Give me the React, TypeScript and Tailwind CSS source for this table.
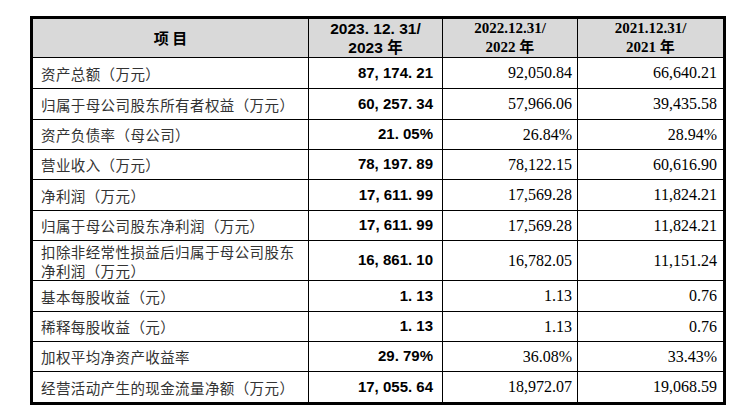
import React from "react";

type Row = {
  label: React.ReactNode;
  y2023: string;
  y2022: string;
  y2021: string;
  h: string;
};

const rows: Row[] = [
  { label: "资产总额（万元）", y2023: "87, 174. 21", y2022: "92,050.84", y2021: "66,640.21", h: "h-[30px]" },
  { label: "归属于母公司股东所有者权益（万元）", y2023: "60, 257. 34", y2022: "57,966.06", y2021: "39,435.58", h: "h-[30px]" },
  { label: "资产负债率（母公司）", y2023: "21. 05%", y2022: "26.84%", y2021: "28.94%", h: "h-[29px]" },
  { label: "营业收入（万元）", y2023: "78, 197. 89", y2022: "78,122.15", y2021: "60,616.90", h: "h-[29px]" },
  { label: "净利润（万元）", y2023: "17, 611. 99", y2022: "17,569.28", y2021: "11,824.21", h: "h-[30px]" },
  { label: "归属于母公司股东净利润（万元）", y2023: "17, 611. 99", y2022: "17,569.28", y2021: "11,824.21", h: "h-[29px]" },
  {
    label: (
      <>
        扣除非经常性损益后归属于母公司股东
        <br />
        净利润（万元）
      </>
    ),
    y2023: "16, 861. 10",
    y2022: "16,782.05",
    y2021: "11,151.24",
    h: "h-[39px]",
  },
  { label: "基本每股收益（元）", y2023: "1. 13", y2022: "1.13", y2021: "0.76", h: "h-[30px]" },
  { label: "稀释每股收益（元）", y2023: "1. 13", y2022: "1.13", y2021: "0.76", h: "h-[29px]" },
  { label: "加权平均净资产收益率", y2023: "29. 79%", y2022: "36.08%", y2021: "33.43%", h: "h-[29px]" },
  { label: "经营活动产生的现金流量净额（万元）", y2023: "17, 055. 64", y2022: "18,972.07", y2021: "19,068.59", h: "h-[30px]" },
];

const cjk = "font-['Noto_Sans_CJK_SC',sans-serif]";
const serif = "font-['Liberation_Serif','Noto_Sans_CJK_SC',serif]";
const sans = "font-['Liberation_Sans','Noto_Sans_CJK_SC',sans-serif]";

const App = () => {
  return (
    <div className="w-[738px] h-[418px] bg-white pt-[16px] pl-[30px]">
      <div className="w-[696px] border-[3px] border-black bg-black grid grid-cols-[275px_133px_134px_145px] gap-px">
        {/* header */}
        <div className={`h-[38px] bg-[#d9d9d9] flex items-center justify-center text-[15px] font-bold text-black ${cjk}`}>
          项 目
        </div>
        <div className={`h-[38px] bg-[#d9d9d9] flex flex-col items-center justify-center text-[15.5px] leading-[19px] font-bold text-black ${sans}`}>
          <span>2023. 12. 31/</span>
          <span>2023 年</span>
        </div>
        <div className={`h-[38px] bg-[#d9d9d9] flex flex-col items-center justify-center text-[15px] leading-[19px] font-bold text-black ${serif}`}>
          <span>2022.12.31/</span>
          <span>2022 年</span>
        </div>
        <div className={`h-[38px] bg-[#d9d9d9] flex flex-col items-center justify-center text-[15px] leading-[19px] font-bold text-black ${serif}`}>
          <span>2021.12.31/</span>
          <span>2021 年</span>
        </div>

        {rows.map((r, i) => (
          <React.Fragment key={i}>
            <div className={`${r.h} bg-white flex items-center pl-[8px] text-[14.5px] leading-[19px] tracking-[0.4px] text-[#333] ${cjk}`}>
              <span>{r.label}</span>
            </div>
            <div className={`${r.h} bg-white flex items-center justify-end pr-[9px] text-[15px] font-bold text-black ${sans}`}>
              {r.y2023}
            </div>
            <div className={`${r.h} bg-white flex items-center justify-end pr-[5px] text-[16px] text-black ${serif}`}>
              {r.y2022}
            </div>
            <div className={`${r.h} bg-white flex items-center justify-end pr-[6px] text-[16px] text-black ${serif}`}>
              {r.y2021}
            </div>
          </React.Fragment>
        ))}
      </div>
    </div>
  );
};

export default App;
